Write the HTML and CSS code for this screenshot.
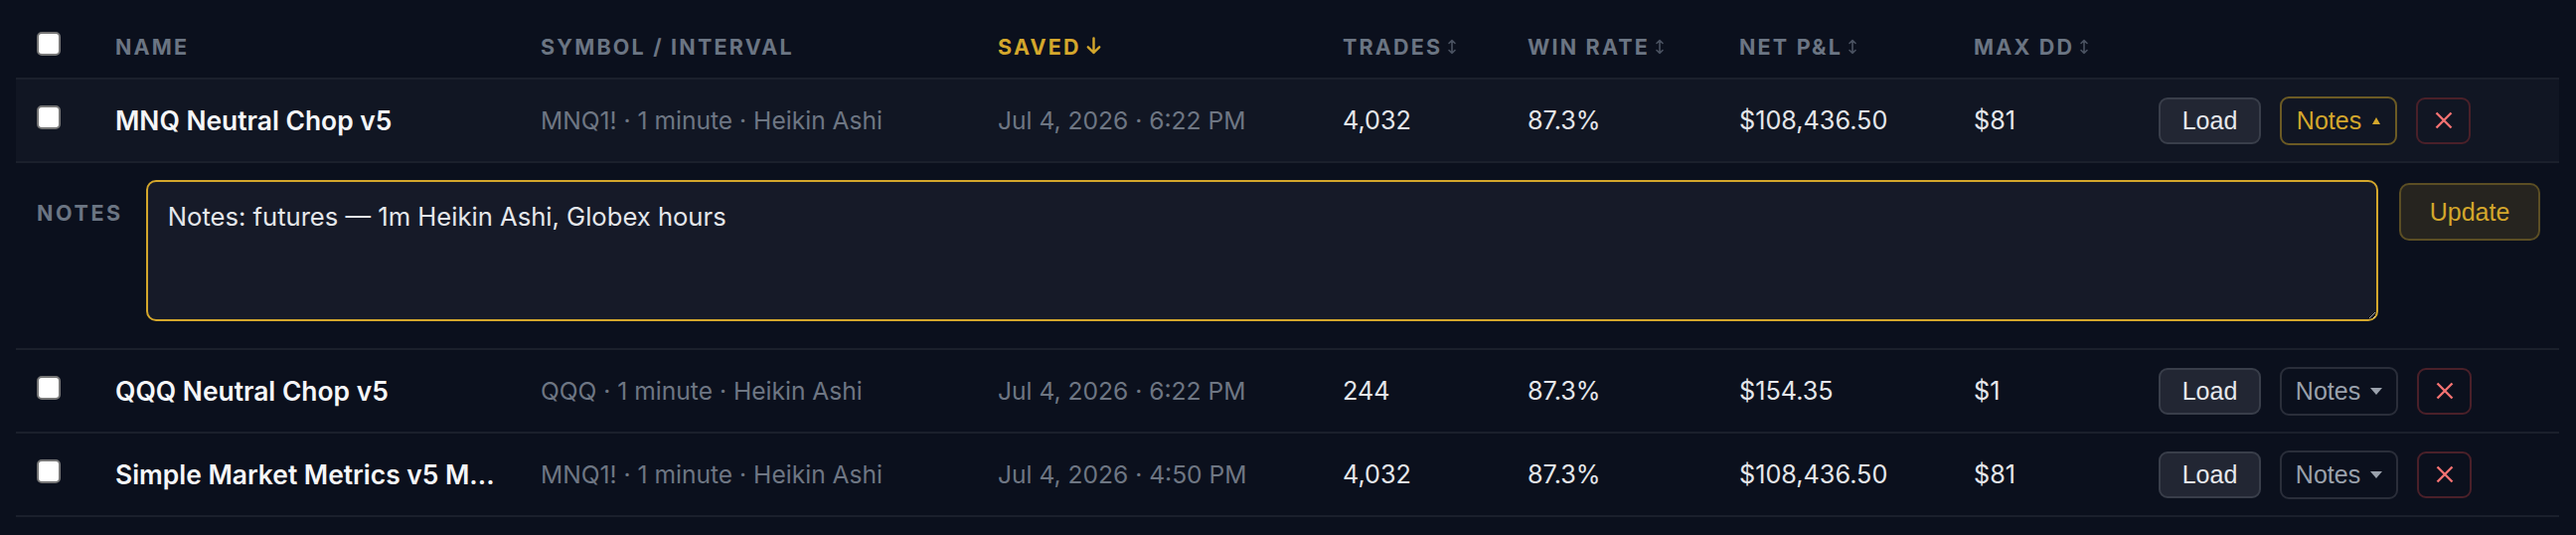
FILE: index.html
```html
<!doctype html>
<html>
    <head>
        <title>Saved Strategies</title>
        <meta charset="UTF-8">
        <link rel="stylesheet" href="styles.css">
    </head>

    <body>
        <!--Saved list Start-->
        <section class="saved">
            <div class="row head">
                <div class="cell check"><input type="checkbox"></div>
                <div class="cell">Name</div>
                <div class="cell">Symbol / Interval</div>
                <div class="cell sorted">Saved
                    <svg class="arrow" width="15" height="18" viewBox="0 0 15 18"><path d="M7.5 1.5V16M1.8 10.3L7.5 16L13.2 10.3" fill="none" stroke="currentColor" stroke-width="2.4" stroke-linecap="round" stroke-linejoin="round"/></svg>
                </div>
                <div class="cell">Trades
                    <svg class="sort" width="10" height="16" viewBox="0 0 10 16"><path d="M5 1.5V14.5M2 4.5L5 1.5L8 4.5M2 11.5L5 14.5L8 11.5" fill="none" stroke="currentColor" stroke-width="1.6" stroke-linecap="round" stroke-linejoin="round"/></svg>
                </div>
                <div class="cell">Win Rate
                    <svg class="sort" width="10" height="16" viewBox="0 0 10 16"><path d="M5 1.5V14.5M2 4.5L5 1.5L8 4.5M2 11.5L5 14.5L8 11.5" fill="none" stroke="currentColor" stroke-width="1.6" stroke-linecap="round" stroke-linejoin="round"/></svg>
                </div>
                <div class="cell">Net P&amp;L
                    <svg class="sort" width="10" height="16" viewBox="0 0 10 16"><path d="M5 1.5V14.5M2 4.5L5 1.5L8 4.5M2 11.5L5 14.5L8 11.5" fill="none" stroke="currentColor" stroke-width="1.6" stroke-linecap="round" stroke-linejoin="round"/></svg>
                </div>
                <div class="cell">Max DD
                    <svg class="sort" width="10" height="16" viewBox="0 0 10 16"><path d="M5 1.5V14.5M2 4.5L5 1.5L8 4.5M2 11.5L5 14.5L8 11.5" fill="none" stroke="currentColor" stroke-width="1.6" stroke-linecap="round" stroke-linejoin="round"/></svg>
                </div>
                <div class="cell"></div>
            </div>

            <div class="row item open">
                <div class="cell check"><input type="checkbox"></div>
                <div class="cell name">MNQ Neutral Chop v5</div>
                <div class="cell muted">MNQ1! · 1 minute · Heikin Ashi</div>
                <div class="cell muted">Jul 4, 2026 · 6:22 PM</div>
                <div class="cell num">4,032</div>
                <div class="cell num">87.3%</div>
                <div class="cell num">$108,436.50</div>
                <div class="cell num">$81</div>
                <div class="cell actions">
                    <button class="btn load">Load</button>
                    <button class="btn notes active">Notes
                        <svg width="8" height="7" viewBox="0 0 8 7"><path d="M4 0L8 7H0Z" fill="currentColor"/></svg>
                    </button>
                    <button class="btn del">
                        <svg width="18" height="18" viewBox="0 0 18 18"><path d="M1.5 1.5L16.5 16.5M16.5 1.5L1.5 16.5" stroke="currentColor" stroke-width="2.4"/></svg>
                    </button>
                </div>
            </div>

            <!--Notes editor for the open row-->
            <div class="notes-row">
                <label class="notes-label">Notes</label>
                <textarea class="notes-text">Notes: futures — 1m Heikin Ashi, Globex hours</textarea>
                <button class="btn update">Update</button>
            </div>

            <div class="row item">
                <div class="cell check"><input type="checkbox"></div>
                <div class="cell name">QQQ Neutral Chop v5</div>
                <div class="cell muted">QQQ · 1 minute · Heikin Ashi</div>
                <div class="cell muted">Jul 4, 2026 · 6:22 PM</div>
                <div class="cell num">244</div>
                <div class="cell num">87.3%</div>
                <div class="cell num">$154.35</div>
                <div class="cell num">$1</div>
                <div class="cell actions">
                    <button class="btn load">Load</button>
                    <button class="btn notes">Notes
                        <svg width="12" height="7" viewBox="0 0 12 7"><path d="M0 0H12L6 7Z" fill="currentColor"/></svg>
                    </button>
                    <button class="btn del">
                        <svg width="18" height="18" viewBox="0 0 18 18"><path d="M1.5 1.5L16.5 16.5M16.5 1.5L1.5 16.5" stroke="currentColor" stroke-width="2.4"/></svg>
                    </button>
                </div>
            </div>

            <div class="row item">
                <div class="cell check"><input type="checkbox"></div>
                <div class="cell name">Simple Market Metrics v5 M...</div>
                <div class="cell muted">MNQ1! · 1 minute · Heikin Ashi</div>
                <div class="cell muted">Jul 4, 2026 · 4:50 PM</div>
                <div class="cell num">4,032</div>
                <div class="cell num">87.3%</div>
                <div class="cell num">$108,436.50</div>
                <div class="cell num">$81</div>
                <div class="cell actions">
                    <button class="btn load">Load</button>
                    <button class="btn notes">Notes
                        <svg width="12" height="7" viewBox="0 0 12 7"><path d="M0 0H12L6 7Z" fill="currentColor"/></svg>
                    </button>
                    <button class="btn del">
                        <svg width="18" height="18" viewBox="0 0 18 18"><path d="M1.5 1.5L16.5 16.5M16.5 1.5L1.5 16.5" stroke="currentColor" stroke-width="2.4"/></svg>
                    </button>
                </div>
            </div>
        </section>
        <!--Saved list End-->
    </body>
</html>
```

FILE: styles.css
```css
body{
    box-sizing: border-box;
    margin: 0;
    padding: 0;
    background: #0b101d;
    font-family: Inter, "Noto Sans", Arial, sans-serif;
}

.saved{
    padding: 16px 17px 0 16px;
}

/* Rows */
.row{
    display: grid;
    grid-template-columns: 100px 428px 460px 347px 186px 213px 236px 186px 1fr;
    align-items: center;
    border-bottom: 2px solid #1b202c;
}

.row.head{
    height: 62px;
}

.row.item{
    height: 82px;
}

.row.open{
    background: #111623;
}

.cell{
    white-space: nowrap;
}

.check{
    padding-left: 21px;
    display: flex;
}

.check input{
    appearance: none;
    width: 24px;
    height: 24px;
    margin: 0 0 6px 0;
    background: #fff;
    border: 2px solid #767676;
    border-radius: 5px;
}

/* Header */
.head .cell{
    display: flex;
    align-items: center;
    color: #6b7583;
    font-size: 21.5px;
    font-weight: 700;
    letter-spacing: 2.2px;
    text-transform: uppercase;
}

.head .sorted{
    color: #d4a72c;
}

.head .arrow{
    margin-left: 5px;
    margin-bottom: 2px;
}

.head .sort{
    margin-left: 5px;
    color: #4a5261;
}

/* Body cells */
.name{
    color: #f5f6f8;
    font-size: 26.4px;
    font-weight: 600;
}

.muted{
    color: #6e7683;
    font-size: 24.6px;
}

.num{
    color: #e5e7eb;
    font-size: 25.2px;
}

/* Buttons */
.actions{
    display: flex;
    align-items: center;
    gap: 19px;
}

.btn{
    display: flex;
    align-items: center;
    justify-content: center;
    box-sizing: border-box;
    padding: 0;
    font-family: "Liberation Sans", Arial, sans-serif;
    font-size: 25px;
    border-radius: 9px;
    background: transparent;
}

.btn.load{
    width: 103px;
    height: 47px;
    color: #e6e8ec;
    background: #222633;
    border: 2px solid #393e4a;
}

.btn.notes{
    width: 119px;
    height: 49px;
    gap: 10px;
    color: #9aa1ac;
    border: 2px solid #2a2e3a;
}

.btn.notes.active{
    width: 118px;
    gap: 11px;
    color: #d4a72c;
    border-color: #6b5a24;
}

.btn.del{
    width: 55px;
    height: 47px;
    color: #f47272;
    border: 2px solid #4a2029;
}

/* Notes editor */
.notes-row{
    display: flex;
    align-items: flex-start;
    height: 188px;
    box-sizing: border-box;
    padding: 17px 19px 0 21px;
    border-bottom: 2px solid #1b202c;
}

.notes-label{
    padding-top: 20px;
    margin-right: 23px;
    color: #6b7583;
    font-size: 21.5px;
    font-weight: 700;
    letter-spacing: 2.6px;
    text-transform: uppercase;
}

.notes-text{
    flex: 1;
    height: 142px;
    box-sizing: border-box;
    margin: 0 21px 0 0;
    padding: 17px 20px;
    background: #161a28;
    color: #e5e7eb;
    border: 2px solid #d4a72c;
    border-radius: 10px;
    outline: none;
    resize: vertical;
    font-family: Inter, "Noto Sans", Arial, sans-serif;
    font-size: 25.6px;
    line-height: 1.4;
}

.btn.update{
    width: 142px;
    height: 58px;
    margin-top: 3px;
    color: #d4a72c;
    background: #26241f;
    border: 2px solid #5b4e24;
    border-radius: 10px;
}
```
